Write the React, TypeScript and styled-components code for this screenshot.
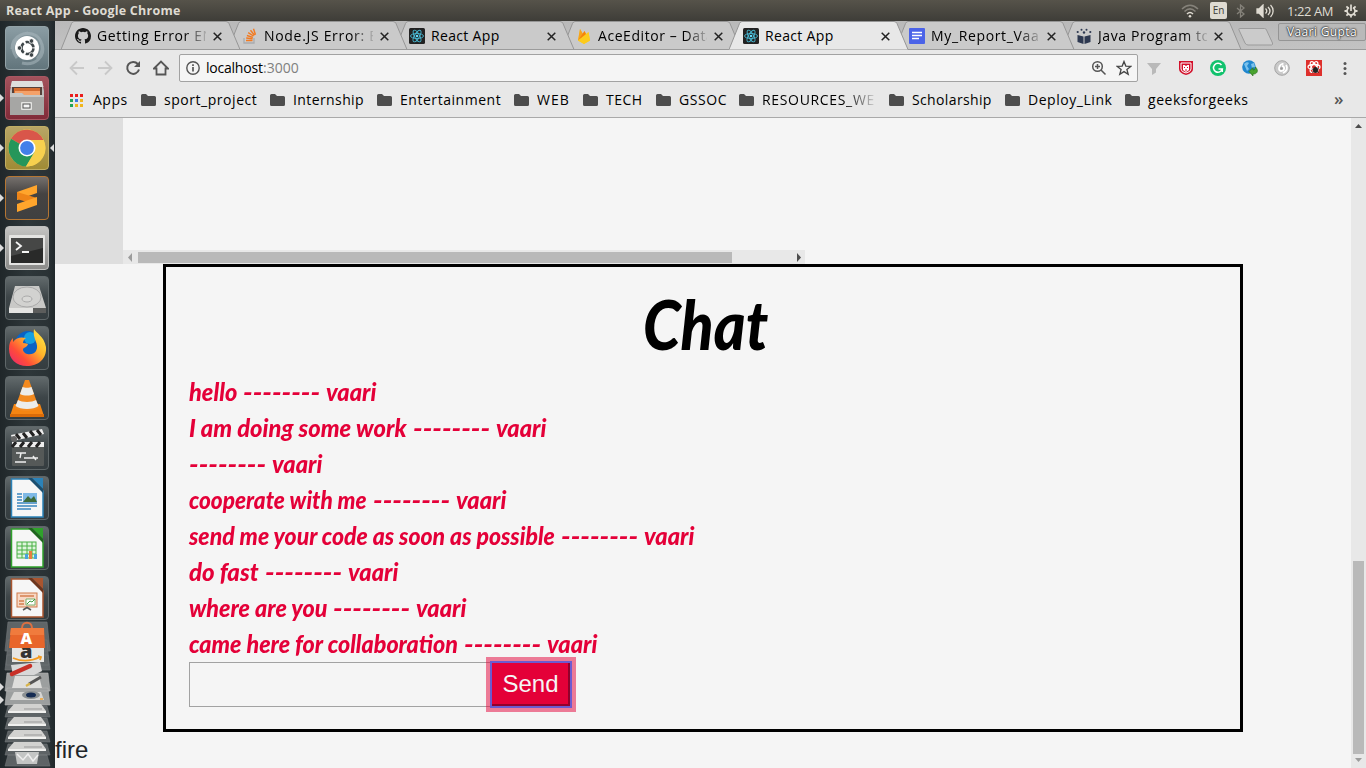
import React, { useLayoutEffect, useRef, useState } from "react";
import styled, { createGlobalStyle } from "styled-components";

const Global = createGlobalStyle`
  * { box-sizing: border-box; }
  html, body { margin: 0; padding: 0; overflow: hidden; background: #f5f5f5; }
  svg { display: block; flex: none; }
`;

const ui = `"Open Sans", "Noto Sans", sans-serif`;

/* Text set to an exact advance width, by tracking or by condensing. */
const FitBox = styled.span<{ $w: number }>`
  display: inline-block;
  flex: none;
  width: ${(p) => p.$w}px;
  white-space: pre;
`;
const FitInner = styled.span`
  display: inline-block;
  white-space: pre;
  transform-origin: 0 50%;
`;
function Fit({ w, squeeze, children }: { w: number; squeeze?: boolean; children: string }) {
  const ref = useRef<HTMLSpanElement>(null);
  const [style, setStyle] = useState<React.CSSProperties>({});
  useLayoutEffect(() => {
    const natural = ref.current!.offsetWidth;
    if (squeeze) setStyle({ transform: `scaleX(${w / natural})` });
    else setStyle({ letterSpacing: `${(w - natural) / children.length}px` });
  }, [w, squeeze, children]);
  return (
    <FitBox $w={w}>
      <FitInner ref={ref} style={style}>{children}</FitInner>
    </FitBox>
  );
}

/* ---------- desktop shell ---------- */
const Screen = styled.div`
  width: 1366px;
  height: 768px;
  display: flex;
  flex-direction: column;
  overflow: hidden;
  font-family: ${ui};
`;
const TopBar = styled.header`
  height: 21px;
  flex: none;
  display: flex;
  align-items: center;
  justify-content: space-between;
  padding: 0 8px 0 6px;
  background: linear-gradient(#56534a, #3e3d38);
  color: #dfdbd2;
  font-size: 12.5px;
  line-height: 20px;
`;
const WindowTitle = styled.span`
  font-weight: 700;
`;
const Indicators = styled.div`
  display: flex;
  align-items: center;
`;
const Volume = styled.svg`
  margin-left: 10px;
`;
const Clock = styled.span`
  font-size: 13px;
  margin: 0 11px 0 13px;
`;
const Lang = styled.span`
  width: 17px;
  height: 17px;
  margin: 0 9px 0 11px;
  border-radius: 2px;
  background: #dfdbd2;
  color: #3c3b37;
  font-size: 10px;
  line-height: 17px;
  text-align: center;
`;
const Desktop = styled.div`
  flex: 1;
  display: flex;
  min-height: 0;
`;

/* ---------- launcher ---------- */
const Launcher = styled.nav`
  width: 55px;
  flex: none;
  overflow: hidden;
  padding-top: 5px;
  display: flex;
  flex-direction: column;
  background: linear-gradient(90deg, #20272a, #2e373a 50%, #2a3235 88%, #20282b);
`;
const Slot = styled.div`
  position: relative;
  height: 50px;
  flex: none;
  padding-left: 5px;
`;
const Tile = styled.div<{ $bg: string; $edge?: string }>`
  width: 44px;
  height: 44px;
  border-radius: 4px;
  background: ${(p) => p.$bg};
  border: 1px solid ${(p) => p.$edge ?? "#5f6769"};
  display: flex;
  align-items: center;
  justify-content: center;
`;
const Pip = styled.i<{ $right?: boolean }>`
  position: absolute;
  top: 18px;
  ${(p) => (p.$right ? "right: 1px; border-right: 4px solid #dcdcdc;" : "left: 0; border-left: 4px solid #dcdcdc;")}
  border-top: 4px solid transparent;
  border-bottom: 4px solid transparent;
`;
const Stack = styled.div`
  height: 150px;
  flex: none;
  margin-top: -8px;
`;

const dark = "linear-gradient(#626a6c, #3d4548 48%, #353d40)";

const UbuntuIcon = () => (
  <svg width="42" height="42" viewBox="0 0 42 42" fill="none">
    <path d="M6 22C6 8 20 3 31 9M36 17c4 14-8 22-20 19M11 31C2 20 10 7 22 6M31 32c9-9 5-20-2-24" stroke="#b0bec3" strokeWidth="3" opacity=".5" />
    <circle cx="21" cy="21" r="12" fill="#fff" />
    <circle cx="21.500" cy="21" r="6" stroke="#3e4649" strokeWidth="2.600" strokeDasharray="10.560 2" strokeDashoffset="-1" transform="rotate(-5 21.500 21)" />
    <g fill="#3e4649" stroke="#fff" strokeWidth=".8"><circle cx="13.500" cy="21" r="2.300" /><circle cx="25.500" cy="14" r="2.300" /><circle cx="25.500" cy="28" r="2.300" /></g>
  </svg>
);
const FilesIcon = () => (
  <svg width="42" height="42" viewBox="0 0 42 42">
    <path d="M6 4h30l2 10v24H4V14z" fill="#bcbcba" /><path d="M6 4h30l1.500 6h-33z" fill="#dededc" />
    <path d="M6 10h30v9H6z" fill="#55403a" /><path d="M8 11h26v8H8z" fill="#d46c30" /><path d="M9 14h25v5H9z" fill="#f4a169" />
    <path d="M4 16h12l2 2h20v20H4z" fill="#a6a6a4" /><path d="M4 16h12l2 2h20v2H4z" fill="#c6c6c4" />
    <rect x="15" y="25" width="11" height="8" rx="1" fill="#e4e4e2" /><rect x="17" y="27" width="7" height="4" fill="#f4f4f4" stroke="#555" />
  </svg>
);
const ChromeIcon = () => (
  <svg width="42" height="42" viewBox="0 0 42 42">
    <circle cx="21" cy="21" r="18.500" fill="#f7d04e" />
    <path d="M21 21 5 11.800A18.500 18.500 0 0 1 37.500 13H21z" fill="#d9564a" />
    <path d="M21 21 5 11.800A18.500 18.500 0 0 0 20 39.500L29 25z" fill="#26965a" />
    <path d="M21 13h16.500a18.500 18.500 0 0 1-17.500 26.500L29 24z" fill="#f7d04e" />
    <circle cx="21" cy="21" r="8.500" fill="#fff" /><circle cx="21" cy="21" r="6.900" fill="#4280ea" />
  </svg>
);
const SublimeIcon = () => (
  <svg width="42" height="42" viewBox="0 0 42 42">
    <path d="M11 15 31 8v8L11 23z" fill="#ffa52c" /><path d="M11 15v7l20 6v-7z" fill="#ee8418" /><path d="M31 20v8L11 35v-8z" fill="#ffa52c" />
  </svg>
);
const TerminalIcon = () => (
  <svg width="42" height="42" viewBox="0 0 42 42">
    <rect x="3" y="8" width="36" height="30" rx="1" fill="#e4e4e2" /><rect x="5" y="11" width="32" height="25" fill="#292a29" />
    <path d="M5 11h32v10L5 29z" fill="#464746" />
    <path d="m10 15 5 4-5 4M16 25h7" stroke="#f4f4f4" strokeWidth="1.800" fill="none" />
  </svg>
);
const DiskIcon = () => (
  <svg width="42" height="42" viewBox="0 0 42 42">
    <path d="M9 9h24l7 22v5H3v-5z" fill="#c9c9c7" /><path d="M3 31h37v5H3z" fill="#5c5d5c" /><path d="M3 31h24v5H3z" fill="#e4e4e2" />
    <ellipse cx="21" cy="20" rx="14" ry="10" fill="#d2d2d0" stroke="#aaa" /><ellipse cx="21" cy="22" rx="5" ry="3" fill="#d8d8d6" stroke="#aaa" />
  </svg>
);
const FirefoxIcon = () => (
  <svg width="42" height="42" viewBox="0 0 42 42">
    <defs><linearGradient id="ff" x1="1" y1="0" x2="0" y2="1"><stop stopColor="#fff14c" /><stop offset=".4" stopColor="#ffb52a" /><stop offset=".7" stopColor="#ff4c38" /><stop offset="1" stopColor="#e72378" /></linearGradient></defs>
    <circle cx="22" cy="17" r="13" fill="#0b62c4" /><circle cx="24" cy="11" r="6" fill="#15a0e0" />
    <path d="M28 2c2 4 10 7 12 18 1 12-8 19-19 19C10 39 3 32 3 22c0-5 1-8 4-11v4c4-5 8-5 13-4-2 1-3 3-3 5 3 0 4 1 5 1-1 4-5 3-5 6 1 5 10 6 13 1 4-7-4-12-2-22z" fill="url(#ff)" />
  </svg>
);
const VlcIcon = () => (
  <svg width="42" height="42" viewBox="0 0 42 42">
    <path d="M8 27h26l4 12H4z" fill="#f58512" /><path d="M19 3h4l10 28c-4 4-20 4-24 0z" fill="#f38a1f" />
    <path d="m16.500 10-2.500 7c4 2 10 2 14 0l-2.500-7c-2 1-7 1-9 0zM12 23l-2.500 6c5 4 18 4 23 0L30 23c-4 2.500-14 2.500-18 0z" fill="#ececea" />
    <path d="M4 37h34v3H4z" fill="#d96b09" />
  </svg>
);
const ClapperIcon = () => (
  <svg width="42" height="42" viewBox="0 0 42 42">
    <path d="M5 8 36 2l2 5L7 14z" fill="#eee" /><path d="m10 7 4 5M17 6l4 5M24 4l4 5M31 3l4 5" stroke="#222" strokeWidth="3" />
    <rect x="6" y="15" width="32" height="24" rx="1" fill="#555958" /><path d="M6 15h32v5H6z" fill="#eee" />
    <path d="m10 15-4 5M18 15l-4 5M26 15l-4 5M34 15l-4 5" stroke="#222" strokeWidth="3" />
    <path d="M10 26h10M15 26l-1 5M18 31h14M27 29l3 4M9 35h11" stroke="#eee" strokeWidth="1.400" />
    <circle cx="8" cy="12" r="3" fill="#666" />
  </svg>
);
const Doc = ({ color, dim, children }: { color: string; dim: string; children: React.ReactNode }) => (
  <svg width="42" height="42" viewBox="0 0 42 42">
    <path d="M5.500 2h20L37 14v26H5.500z" fill="#f6f6f6" stroke={color} strokeWidth="1.500" />
    <path d="M26 1h11v11z" fill={color} /><path d="M22 1h4l11 11v4z" fill={dim} />
    {children}
  </svg>
);
const WriterIcon = () => (
  <Doc color="#2b82b8" dim="#1b4f70">
    <path d="M11 17h5M11 20h5M11 23h5M11 26h20M11 29h20M11 32h14" stroke="#3a87c0" strokeWidth="1.500" />
    <rect x="17" y="16" width="14" height="9" fill="#7fb9e6" /><path d="m17 25 5-6 3 3 3-3 3 6z" fill="#3e6b3a" />
  </Doc>
);
const CalcIcon = () => (
  <Doc color="#2fa12b" dim="#1e651d">
    <rect x="11" y="15" width="19" height="16" fill="#dff5dc" stroke="#49b044" /><path d="M11 19h19M11 23h19M11 27h19M16 15v16M21 15v16M26 15v16" stroke="#49b044" />
    <path d="M19 32v-5h3v5z" fill="#4aa3dc" /><path d="M23 32v-8h3v8z" fill="#e87d3e" /><path d="M28 32v-5h3v5z" fill="#4aa3dc" />
  </Doc>
);
const ImpressIcon = () => (
  <Doc color="#a9552f" dim="#6d351c">
    <rect x="11" y="16" width="20" height="14" fill="#f7d8c5" stroke="#cf7a4b" /><path d="M14 19h14M13 24h5M13 27h5" stroke="#d57f4f" strokeWidth="1.500" />
    <path d="M20 22h9v6h-9z" fill="#fff" stroke="#7bb06c" /><path d="m21 27 3-3 2 1 3-3" stroke="#3e9b3e" fill="none" /><path d="m17 33 4-2.500 4 2.500" stroke="#555" strokeWidth="1.500" fill="none" />
  </Doc>
);
const IconLetter = styled.text`
  font-family: ${ui};
  font-weight: 800;
`;
const StackIcons = () => (
  <svg width="55" height="150" viewBox="0 618 55 150">
    <g fill="#727779" stroke="#858a8c" strokeWidth=".7" opacity=".75">
      <path d="M8 622h39l3 29H5zM8 640h39l2 25H6zM7 655h41l2 15H5z" />
    </g>
    {[706, 718, 731, 744, 755].map((y) => (
      <path key={y} d={`M8 ${y}h39l3 11H5z`} fill="#6f7476" opacity=".75" stroke="#8b8f90" strokeWidth=".6" />
    ))}
    <path d="M7 673h41l2 18H5zM7 688h41l2 17H5z" fill="#9c9f9f" stroke="#b5b7b7" strokeWidth=".6" />
    <path d="M12 648h32v14H12z" fill="#e6e6e4" />
    <IconLetter x="20" y="658" fontSize="20" fill="#333">a</IconLetter>
    <path d="M11 628h33l1 20H9z" fill="#e8662b" /><path d="M11 628h33v7H10z" fill="#f07b3d" /><path d="M22 628c0-7 10-7 10 0" stroke="#dd7041" strokeWidth="2" fill="none" />
    <IconLetter x="20.500" y="644" fontSize="16" fill="#fff">A</IconLetter>
    <path d="M13 658c9 4 19 3 27-1m-2-1 3 1-1 3" stroke="#f39a1f" strokeWidth="1.800" fill="none" />
    <path d="m11 665 29-3 2 9-8 4H13z" fill="#d8d8d8" /><path d="m12 674 18-8" stroke="#c83027" strokeWidth="4.500" strokeLinecap="round" />
    <path d="M15 676h24l3 12H12z" fill="#dededc" /><path d="m29 684 12-7" stroke="#555" strokeWidth="3" /><path d="m26 686 4-2.500" stroke="#d8b44a" strokeWidth="2.200" />
    <path d="M14 692h27l3 8H10z" fill="#d6d6d4" /><ellipse cx="31" cy="695" rx="9" ry="4" fill="#8b9092" /><ellipse cx="31" cy="695" rx="5" ry="2.500" fill="#152b52" /><path d="M40 699h3" stroke="#f0a030" strokeWidth="1.500" />
    {[704, 717, 730, 742].map((y) => (
      <g key={y}><path d={`M14 ${y}h27l5 7H8z`} fill="#d2d2d0" /><path d={`M8 ${y + 7}h38v2H8z`} fill="#f0f0ee" /><path d={`M24 ${y + 5}h18`} stroke="#999" /></g>
    ))}
    <path d="M15 752h24l-2 12H17z" fill="#c3c5c4" /><path d="m17 754 6 6 5-6 5 7 5-6" stroke="#eee" fill="none" strokeWidth="1.500" />
    <path d="M0 683l4 4-4 4zM0 696l4 4-4 4z" fill="#dcdcdc" />
  </svg>
);

const apps = [
  { icon: <UbuntuIcon />, bg: "linear-gradient(#8b9da4, #62757c)", edge: "#93a2a7" },
  { icon: <FilesIcon />, bg: "linear-gradient(#a3525c, #812b39)", edge: "#a85762", run: true },
  { icon: <ChromeIcon />, bg: "linear-gradient(#b8a566, #a08b35)", edge: "#c1ae64", run: true, active: true },
  { icon: <SublimeIcon />, bg: "linear-gradient(#75706c, #454342 40%, #3f4040)", edge: "#b57633", run: true },
  { icon: <TerminalIcon />, bg: "linear-gradient(#c4c4c2, #8c8c8a)", edge: "#c0c0be", run: true },
  { icon: <DiskIcon />, bg: dark },
  { icon: <FirefoxIcon />, bg: dark },
  { icon: <VlcIcon />, bg: dark },
  { icon: <ClapperIcon />, bg: dark },
  { icon: <WriterIcon />, bg: dark },
  { icon: <CalcIcon />, bg: dark },
  { icon: <ImpressIcon />, bg: dark },
];

/* ---------- browser chrome ---------- */
const Browser = styled.main`
  flex: 1;
  min-width: 0;
  display: flex;
  flex-direction: column;
`;
const TabStrip = styled.div`
  height: 29px;
  flex: none;
  display: flex;
  padding-left: 6px;
  background: linear-gradient(#b9b9b9, #c3c3c3);
  box-shadow: inset 0 -1px #9b9b9b;
`;
const TabBox = styled.div<{ $z: number; $w: number }>`
  position: relative;
  z-index: ${(p) => p.$z};
  width: ${(p) => p.$w}px;
  height: 29px;
  flex: none;
  margin-right: -13px;
  display: flex;
  align-items: center;
  padding: 1px 0 0 14px;
  font-size: 14px;
  color: #000;
`;
const TabShape = styled.svg`
  position: absolute;
  inset: 0;
  z-index: -1;
`;
const TabTitle = styled.span<{ $fade?: boolean }>`
  width: 109px;
  margin: 0 7px 0 6px;
  overflow: hidden;
  white-space: nowrap;
  line-height: 20px;
  ${(p) => p.$fade && "mask-image: linear-gradient(90deg, #000 80%, transparent 103%);"}
`;
const NewTab = styled.svg`
  margin: 7px 0 0 9px;
`;
const Profile = styled.div`
  margin: 2px 0 0 4px;
  width: 88px;
  height: 18px;
  border: 1px solid #959595;
  border-radius: 2px;
  background: #b9b9b9;
  padding-left: 8px;
  color: #fff;
  font-size: 12px;
  line-height: 16px;
  text-shadow: 0 0 2px #222, 0 0 2px #222, 0 0 1px #222;
`;
const Toolbar = styled.div`
  height: 36px;
  flex: none;
  display: flex;
  align-items: center;
  background: #e8e8e8;
  padding-left: 14px;
`;
const NavIcons = styled.div`
  display: flex;
  gap: 12px;
  width: 110px;
`;
const Omnibox = styled.div`
  width: 959px;
  height: 28px;
  display: flex;
  align-items: center;
  padding: 0 5px 0 6px;
  background: #f5f5f5;
  border: 1px solid #a2a2a2;
  border-radius: 2px;
  font-size: 14px;
  line-height: 18px;
  color: #000;
`;
const Address = styled.div`
  flex: 1;
  display: flex;
  margin: 0 0 1px 6px;
`;
const Port = styled.span`
  color: #808080;
`;
const OmniIcons = styled.div`
  display: flex;
  gap: 9px;
`;
const Extensions = styled.div`
  display: flex;
  gap: 16px;
  margin-left: 8px;
`;
const Bookmarks = styled.div`
  height: 32px;
  flex: none;
  display: flex;
  align-items: center;
  padding: 0 0 3px 15px;
  background: #e8e8e8;
  border-bottom: 1px solid #a9a9a9;
  color: #000;
  font-size: 14px;
  line-height: 20px;
`;
const Bookmark = styled.span<{ $gap?: number; $fade?: boolean }>`
  display: flex;
  align-items: center;
  gap: 8px;
  margin-right: ${(p) => p.$gap ?? 13}px;
  ${(p) => p.$fade && "mask-image: linear-gradient(90deg, #000 78%, transparent 102%);"}
`;
const More = styled.span`
  margin: -3px 0 0 72px;
  font-size: 17px;
  font-weight: 600;
  color: #555;
`;

const FOLDER = "M0 2.500Q0 1 1.500 1H5l2 2h6.500Q15 3 15 4.500v7Q15 13 13.500 13h-12Q0 13 0 11.500z";
const Folder = () => <svg width="15" height="14" viewBox="0 0 15 14"><path d={FOLDER} fill="#4d4d4d" /></svg>;
const folders: { t: string; w: number; gap?: number; fade?: boolean }[] = [
  { t: "sport_project", w: 93 }, { t: "Internship", w: 71 }, { t: "Entertainment", w: 101 },
  { t: "WEB", w: 33 }, { t: "TECH", w: 37 }, { t: "GSSOC", w: 48, gap: 12 },
  { t: "RESOURCES_WE", w: 113, gap: 14, fade: true }, { t: "Scholarship", w: 80 },
  { t: "Deploy_Link", w: 84 }, { t: "geeksforgeeks", w: 101 },
];

const GithubIcon = () => (
  <svg width="16" height="16" viewBox="0 0 16 16"><path fill="#1b1b1b" d="M8 0C3.580 0 0 3.580 0 8c0 3.540 2.290 6.530 5.470 7.590.4.070.55-.17.55-.38v-1.490c-2.010.37-2.530-.49-2.690-.94-.09-.23-.48-.94-.82-1.130-.28-.15-.68-.52-.01-.53.63-.01 1.080.58 1.230.82.72 1.210 1.870.87 2.330.66.07-.52.28-.87.51-1.070-1.780-.2-3.640-.89-3.640-3.950 0-.87.31-1.590.82-2.150-.08-.2-.36-1.020.08-2.120 0 0 .67-.21 2.200.82a7.600 7.600 0 0 1 4 0c1.530-1.040 2.200-.82 2.200-.82.44 1.100.16 1.920.08 2.120.51.56.82 1.270.82 2.150 0 3.070-1.870 3.750-3.650 3.950.29.25.54.73.54 1.480v2.200c0 .21.15.46.55.38A8 8 0 0 0 16 8c0-4.420-3.580-8-8-8z" /></svg>
);
const StackOverflowIcon = () => (
  <svg width="16" height="16" viewBox="0 0 16 16" fill="none"><path d="M2 10v5h10v-5" stroke="#a9abae" strokeWidth="1.300" /><path d="M4 12.500h6.500M4.200 10l6.400.7M4.900 7.500l6 1.800M6.200 4.700l5.300 3.300M8.500 2.200l4 5M11.500.7l2 6" stroke="#f37a20" strokeWidth="1.400" /></svg>
);
const ReactIcon = () => (
  <svg width="16" height="16" viewBox="0 0 16 16" fill="none"><rect width="16" height="16" rx="1.500" fill="#222" /><g stroke="#48b8d2" strokeWidth=".9"><ellipse cx="8" cy="8" rx="6.500" ry="2.500" /><ellipse cx="8" cy="8" rx="6.500" ry="2.500" transform="rotate(60 8 8)" /><ellipse cx="8" cy="8" rx="6.500" ry="2.500" transform="rotate(120 8 8)" /></g><circle cx="8" cy="8" r="1.300" fill="#61dafb" /></svg>
);
const FirebaseIcon = () => (
  <svg width="16" height="16" viewBox="0 0 16 16"><path d="M2 12.500 4 1l3 5 1.500-3 2 3.500L12.500 4 14 12.500 8 16z" fill="#ffc929" /><path d="M2 12.500 4 1l3 5z" fill="#f5a21c" /><path d="m2 12.500 6.500-9.500 2 4z" fill="#f5820b" /><path d="M2 12.500 12.500 4 14 12.500 8 16z" fill="#fccb1c" /></svg>
);
const DocsIcon = () => (
  <svg width="16" height="16" viewBox="0 0 16 16"><rect width="16" height="16" rx="1" fill="#4b63e8" /><path d="M3 4.500h10M3 7.500h10M3 10.500h7" stroke="#fff" strokeWidth="1.300" /></svg>
);
const BookIcon = () => (
  <svg width="16" height="16" viewBox="0 0 16 16" fill="#2d3850"><path d="m1.500 7 6 1.500V16l-6-2zM14.500 7l-6 1.500V16l6-2z" /><circle cx="1.700" cy="4" r="1.100" /><circle cx="5.500" cy="1.800" r="1" /><circle cx="10.500" cy="1.800" r="1" /><circle cx="14.300" cy="4" r="1.100" /><circle cx="8" cy="4.500" r="1.200" /></svg>
);

const tabs = [
  { icon: <GithubIcon />, title: "Getting Error EN", w: 117, fade: true },
  { icon: <StackOverflowIcon />, title: "Node.JS Error: E", w: 114, fade: true },
  { icon: <ReactIcon />, title: "React App", w: 69 },
  { icon: <FirebaseIcon />, title: "AceEditor – Data", w: 116, fade: true },
  { icon: <ReactIcon />, title: "React App", w: 69, active: true },
  { icon: <DocsIcon />, title: "My_Report_Vaar", w: 115, fade: true },
  { icon: <BookIcon />, title: "Java Program to", w: 113, fade: true },
];

/* ---------- page ---------- */
const Viewport = styled.div`
  flex: 1;
  min-height: 0;
  display: flex;
  background: #f5f5f5;
`;
const Page = styled.div`
  flex: 1;
  min-width: 0;
  display: flex;
  flex-direction: column;
`;
const Editor = styled.div`
  height: 146px;
  flex: none;
  display: flex;
`;
const Gutter = styled.div`
  width: 68px;
  background: #dedede;
`;
const Code = styled.div`
  width: 682px;
  display: flex;
  flex-direction: column;
  justify-content: flex-end;
`;
const HTrack = styled.div`
  height: 14px;
  display: flex;
  align-items: center;
  background: #e8e8e8;
`;
const HThumb = styled.div`
  width: 594px;
  height: 11px;
  margin: 1px 63px 0 3px;
  background: #b9b9b9;
`;
const ChatBox = styled.section`
  width: 1080px;
  height: 468px;
  flex: none;
  margin-left: 108px;
  border: 3px solid #000;
  padding: 16px 23px 0;
  color: #e40038;
`;
const Heading = styled.h1`
  margin: 0;
  height: 91px;
  padding-left: 454px;
  color: #000;
  font: italic 900 69px/82px Lato, "Open Sans", sans-serif;
`;
const Message = styled.div`
  height: 36px;
  display: flex;
  gap: 6px;
  font: italic 900 25px/34px Lato, "Open Sans", sans-serif;
`;
const Form = styled.div`
  display: flex;
  height: 45px;
`;
const Field = styled.div`
  width: 302px;
  border: 1px solid #a2a2a2;
  border-right: 0;
`;
const Send = styled.button`
  width: 80px;
  height: 45px;
  padding: 0 0 0 1px;
  background: #e40038;
  border: solid;
  border-width: 1px 3px 3px 1px;
  border-color: #e40038 #93002b #93002b #e40038;
  border-radius: 0;
  color: #f5f5f5;
  font: 24px/38px "Liberation Sans", sans-serif;
  outline: 2px solid #6c5bd0;
  outline-offset: -1px;
  box-shadow: 0 0 0 5px rgba(228, 0, 56, 0.5);
`;
const Footer = styled.div`
  color: #212529;
  font: 24px/36px "Liberation Sans", sans-serif;
`;
const VTrack = styled.div`
  width: 15px;
  flex: none;
  background: #e8e8e8;
  display: flex;
  flex-direction: column;
  align-items: center;
  justify-content: space-between;
  padding: 6px 0;
`;
const VThumb = styled.div`
  width: 11px;
  height: 193px;
  margin-top: 429px;
  background: #b9b9b9;
`;

const messages: [string, number][] = [
  ["hello", 48], ["I am doing some work", 218], ["", 0], ["cooperate with me", 178],
  ["send me your code as soon as possible", 366], ["do fast", 70], ["where are you", 138], ["came here for collaboration", 269],
];

export default function App() {
  return (
    <Screen>
      <Global />
      <TopBar>
        <WindowTitle><Fit w={175}>React App - Google Chrome</Fit></WindowTitle>
        <Indicators>
          <svg width="18" height="14" viewBox="0 0 18 14" fill="none" strokeWidth="1.500"><path d="M1 5c5-5 11-5 16 0M3.500 7.500c3.500-3.500 7.500-3.500 11 0" stroke="#85827a" /><path d="M6 10c2-2 4-2 6 0" stroke="#dfdbd2" /><circle cx="9" cy="12.300" r="1.300" fill="#dfdbd2" /></svg>
          <Lang>En</Lang>
          <svg width="10" height="14" viewBox="0 0 10 14" fill="none" stroke="#85827a" strokeWidth="1.300"><path d="m1 4 7 6-3.500 3V1L8 4l-7 6" /></svg>
          <Volume width="18" height="14" viewBox="0 0 18 14" fill="none" stroke="#dfdbd2" strokeWidth="1.300"><path d="M1 5h2l4-4v12L3 9H1z" fill="#dfdbd2" /><path d="M9.500 4.500c1.500 1.500 1.500 3.500 0 5M12 3c2.500 2.500 2.500 5.500 0 8M14.500 1c3.500 3.500 3.500 8.500 0 12" /></Volume>
          <Clock><Fit w={46}>1:22 AM</Fit></Clock>
          <svg width="14" height="14" viewBox="0 0 14 14" fill="none" stroke="#dfdbd2"><path d="M5 3.600a4 4 0 1 0 4 0M7 .5V7" strokeWidth="1.700" /><path d="M.5 7H3M11 7h2.500M2.400 2.400l1.800 1.800M9.800 4.200l1.800-1.800M2.400 11.600l1.800-1.800M9.800 9.800l1.800 1.800M7 11v2.500" strokeWidth="1.800" /></svg>
        </Indicators>
      </TopBar>
      <Desktop>
        <Launcher>
          {apps.map((a, i) => (
            <Slot key={i}>
              <Tile $bg={a.bg} $edge={a.edge}>{a.icon}</Tile>
              {a.run && <Pip />}
              {a.active && <Pip $right />}
            </Slot>
          ))}
          <Stack><StackIcons /></Stack>
        </Launcher>
        <Browser>
          <TabStrip>
            {tabs.map((t, i) => (
              <TabBox key={i} $z={t.active ? 20 : 10 - i} $w={i === 4 ? 179 : 180}>
                <TabShape width="180" height="29" viewBox="0 0 180 29">
                  <path d="M0 28.500 10.500 2.500Q11.500.5 13 .5H165Q167 .5 168 2.500L179 28.500z" fill={t.active ? "#e8e8e8" : "#cacaca"} />
                  <path d="M0 28.500 10.500 2.500Q11.500.5 13 .5H165Q167 .5 168 2.500L179 28.500" fill="none" stroke="#969696" />
                  {!t.active && <path d="M0 28.500h180" stroke="#9b9b9b" />}
                </TabShape>
                {t.icon}
                <TabTitle $fade={t.fade}><Fit w={t.w}>{t.title}</Fit></TabTitle>
                <svg width="9" height="9" viewBox="0 0 9 9"><path d="m.7.7 7.600 7.600M8.300.7.7 8.300" stroke="#222" strokeWidth="1.500" /></svg>
              </TabBox>
            ))}
            <NewTab width="36" height="18" viewBox="0 0 36 18"><path d="M1.500.5h25q1.500 0 2 1.500l6 13q.5 2-1 2H10q-2 0-3-2L1 2Q.5.5 1.500.5z" fill="#cbcbcb" stroke="#9b9b9b" /></NewTab>
            <Profile><Fit w={70}>Vaari Gupta</Fit></Profile>
          </TabStrip>
          <Toolbar>
            <NavIcons>
              <svg width="16" height="16" viewBox="0 0 16 16" fill="none" stroke="#c9c9c9" strokeWidth="1.800"><path d="M15 8H2M8 1.500 1.500 8 8 14.500" /></svg>
              <svg width="16" height="16" viewBox="0 0 16 16" fill="none" stroke="#c9c9c9" strokeWidth="1.800"><path d="M1 8h13M8 1.500 14.500 8 8 14.500" /></svg>
              <svg width="16" height="16" viewBox="0 0 16 16" fill="none" stroke="#555" strokeWidth="2"><path d="M12.800 4A6 6 0 1 0 14 9.500" /><path d="M15 1v6H9z" fill="#555" stroke="none" /></svg>
              <svg width="16" height="16" viewBox="0 0 16 16" fill="none" stroke="#555" strokeWidth="1.800"><path d="M1 8.500 8 1.500l7 7h-2.500v6h-9v-6z" /></svg>
            </NavIcons>
            <Omnibox>
              <svg width="14" height="14" viewBox="0 0 14 14" fill="none" stroke="#555" strokeWidth="1.400"><circle cx="7" cy="7" r="6.200" /><path d="M7 6v4.500M7 3.300v1.600" strokeWidth="1.700" /></svg>
              <Address><Fit w={57}>localhost</Fit><Port><Fit w={36}>:3000</Fit></Port></Address>
              <OmniIcons>
                <svg width="16" height="16" viewBox="0 0 16 16" fill="none" stroke="#555" strokeWidth="1.500"><circle cx="6.500" cy="6.500" r="4.800" /><path d="m10 10 4.500 4.500M4 6.500h5M6.500 4v5" /></svg>
                <svg width="16" height="16" viewBox="0 0 16 16" fill="none" stroke="#444" strokeWidth="1.300"><path d="m8 1.500 1.800 4.600 4.900.3-3.800 3.100 1.300 4.800L8 11.600l-4.200 2.700 1.300-4.800-3.800-3.100 4.900-.3z" /></svg>
              </OmniIcons>
            </Omnibox>
            <Extensions>
              <svg width="16" height="16" viewBox="0 0 16 16"><path d="M1 3h14L10 9v3.500L6 15V9z" fill="#b9b9b9" /></svg>
              <svg width="16" height="16" viewBox="0 0 16 16"><path d="M1 1h14v8q0 4-7 6-7-2-7-6z" fill="#d2112b" /><path d="M3 3h10v6q0 3-5 4-5-1-5-4z" fill="none" stroke="#fff" /><path d="M5 5h1.500L8 6l1.500-1H11v5l-3 2-3-2z" fill="#fff" /><path d="M6 7.500h1M9 7.500h1M7 10h2" stroke="#d2112b" /></svg>
              <svg width="16" height="16" viewBox="0 0 16 16" fill="none"><circle cx="8" cy="8" r="8" fill="#11c26d" /><path d="M11.500 5A4.500 4.500 0 1 0 12.300 9H8.500M12.300 9v3" stroke="#fff" strokeWidth="1.500" /></svg>
              <svg width="16" height="16" viewBox="0 0 16 16"><circle cx="7" cy="7" r="6.800" fill="#2087cf" /><path d="M2 4c2-2 4-2 5-1L5 6l2 3-2 2zM9 4l3-1 1 4-3 1z" fill="#7ac1ec" /><path d="m7 11.500 4-4v2.500c1.500 0 2.500-1 2.500-3 4 4 1 7.500-2.500 7v2z" fill="#49a32e" stroke="#236b14" strokeWidth=".6" /></svg>
              <svg width="16" height="16" viewBox="0 0 16 16" fill="none"><circle cx="8" cy="8" r="7.300" fill="#c9c9c9" stroke="#a5a5a5" /><path d="M9.500 3.500C4 5 4 11 7 11c4 0 4-5 1-5M9 13c4-2 5-5 3-8" stroke="#fff" strokeWidth="1.800" /><circle cx="7.500" cy="8.500" r="1.300" fill="#999" /></svg>
              <svg width="16" height="16" viewBox="0 0 16 16" fill="none"><rect width="16" height="16" fill="#de302c" /><g stroke="#fff" strokeWidth="1.300"><ellipse cx="8" cy="7" rx="6" ry="2.500" /><ellipse cx="8" cy="7" rx="6" ry="2.500" transform="rotate(60 8 7)" /><ellipse cx="8" cy="7" rx="6" ry="2.500" transform="rotate(120 8 7)" /></g><ellipse cx="9.500" cy="10" rx="2.500" ry="3" fill="#222" /><path d="m6 9 7 3.500M6 12.500l7-4" stroke="#222" strokeWidth=".8" /></svg>
              <svg width="14" height="16" viewBox="0 0 14 16" fill="#555"><circle cx="7" cy="3.500" r="1.500" /><circle cx="7" cy="8.500" r="1.500" /><circle cx="7" cy="13.500" r="1.500" /></svg>
            </Extensions>
          </Toolbar>
          <Bookmarks>
            <Bookmark>
              <svg width="15" height="13" viewBox="0 0 15 13">
                {["#ea1d1d", "#ea1d1d", "#ea1d1d", "#21a35a", "#3c7ae4", "#f0b51d", "#21a35a", "#f0b51d", "#f0b51d"].map((c, i) => (
                  <rect key={i} x={(i % 3) * 5} y={Math.floor(i / 3) * 5} width="3" height="3" fill={c} />
                ))}
              </svg>
              <Fit w={35}>Apps</Fit>
            </Bookmark>
            {folders.map((f) => (
              <Bookmark key={f.t} $gap={f.gap} $fade={f.fade}><Folder /><Fit w={f.w}>{f.t}</Fit></Bookmark>
            ))}
            <More>»</More>
          </Bookmarks>
          <Viewport>
            <Page>
              <Editor>
                <Gutter />
                <Code>
                  <HTrack>
                    <svg width="12" height="9" viewBox="0 0 12 9"><path d="M9 0v9L5 4.500z" fill="#9c9c9c" /></svg>
                    <HThumb />
                    <svg width="8" height="9" viewBox="0 0 8 9"><path d="M2 0v9l4-4.500z" fill="#4c4c4c" /></svg>
                  </HTrack>
                </Code>
              </Editor>
              <ChatBox>
                <Heading><Fit w={125} squeeze>Chat</Fit></Heading>
                {messages.map(([text, w]) => (
                  <Message key={text}>
                    {text && <Fit w={w} squeeze>{text}</Fit>}
                    <Fit w={77} squeeze>--------</Fit>
                    <Fit w={50} squeeze>vaari</Fit>
                  </Message>
                ))}
                <Form><Field /><Send>Send</Send></Form>
              </ChatBox>
              <Footer>fire</Footer>
            </Page>
            <VTrack>
              <svg width="7" height="4" viewBox="0 0 7 4"><path d="M0 4h7L3.500 0z" fill="#4c4c4c" /></svg>
              <VThumb />
              <svg width="7" height="4" viewBox="0 0 7 4"><path d="M0 0h7L3.500 4z" fill="#9c9c9c" /></svg>
            </VTrack>
          </Viewport>
        </Browser>
      </Desktop>
    </Screen>
  );
}
